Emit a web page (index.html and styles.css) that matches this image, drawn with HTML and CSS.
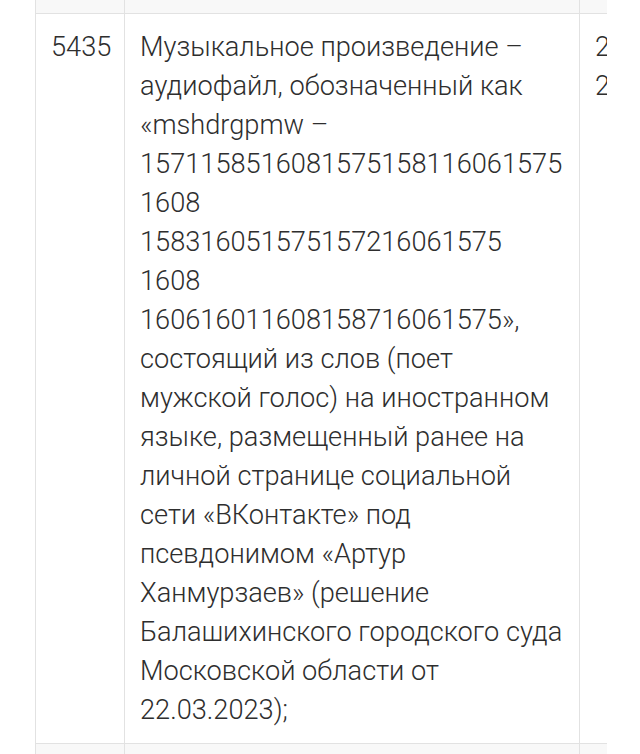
FILE: index.html
```html
<!DOCTYPE html>
<html lang="ru">
<head>
<meta charset="utf-8">
<title>Реестр</title>
<link rel="stylesheet" href="styles.css">
</head>
<body>
<div class="wrap">
  <table class="reg">
    <colgroup>
      <col class="col-num">
      <col class="col-text">
      <col class="col-date">
    </colgroup>
    <tr class="row-alt row-top">
      <td></td>
      <td></td>
      <td></td>
    </tr>
    <tr class="row-main">
      <td>5435</td>
      <td>Музыкальное произведение – аудиофайл, обозначенный как «mshdrgpmw – 1571158516081575158116061575 1608 158316051575157216061575 1608 160616011608158716061575», состоящий из слов (поет мужской голос) на иностранном языке, размещенный ранее на личной странице социальной сети «ВКонтакте» под псевдонимом «Артур Ханмурзаев» (решение Балашихинского городского суда Московской области от 22.03.2023);</td>
      <td>21.04.2023 21.04.2023</td>
    </tr>
    <tr class="row-alt row-bottom">
      <td></td>
      <td></td>
      <td></td>
    </tr>
  </table>
</div>
</body>
</html>
```
FILE: styles.css
```css
html, body {
  margin: 0;
  padding: 0;
  background: #ffffff;
  height: 100%;
  overflow: hidden;
}

.wrap {
  margin-left: 35px;
  width: 572px;
  overflow: hidden;
}

.reg {
  border-collapse: collapse;
  table-layout: fixed;
  width: 745px;
  font-family: Roboto, "Noto Sans", sans-serif;
  font-weight: 300;
  font-size: 27.2px;
  line-height: 39px;
  color: #2e2e2e;
}

.col-num {
  width: 89px;
}

.col-text {
  width: 455px;
}

.col-date {
  width: 201px;
}

.reg td {
  border: 1px solid #e2e2e2;
  vertical-align: top;
  padding: 14px 15px 13px 15px;
}

.row-alt td {
  background: #f8f8f8;
  padding: 0;
}

.row-top td {
  height: 13px;
  border-top: none;
}

.row-bottom td {
  height: 40px;
}
```
